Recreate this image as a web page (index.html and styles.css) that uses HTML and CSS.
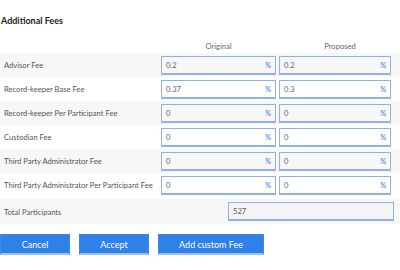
FILE: index.html
```html
<!DOCTYPE html>
<html lang="en">
<head>
    <meta charset="UTF-8">
    <title>Additional Fees</title>
    <link rel="stylesheet" href="styles.css">
</head>
<body>
    <h2 class="fees-title">Additional Fees</h2>

    <div class="fees-table">
        <div class="fees-head">
            <span></span>
            <span>Original</span>
            <span class="head-proposed">Proposed</span>
        </div>

        <div class="fee-row">
            <span class="fee-label">Advisor Fee</span>
            <div class="fee-input"><span>0.2</span><i>%</i></div>
            <div class="fee-input"><span>0.2</span><i>%</i></div>
        </div>
        <div class="fee-row">
            <span class="fee-label">Record-keeper Base Fee</span>
            <div class="fee-input"><span>0.37</span><i>%</i></div>
            <div class="fee-input"><span>0.3</span><i>%</i></div>
        </div>
        <div class="fee-row">
            <span class="fee-label">Record-keeper Per Participant Fee</span>
            <div class="fee-input"><span>0</span><i>%</i></div>
            <div class="fee-input"><span>0</span><i>%</i></div>
        </div>
        <div class="fee-row">
            <span class="fee-label">Custodian Fee</span>
            <div class="fee-input"><span>0</span><i>%</i></div>
            <div class="fee-input"><span>0</span><i>%</i></div>
        </div>
        <div class="fee-row">
            <span class="fee-label">Third Party Administrator Fee</span>
            <div class="fee-input"><span>0</span><i>%</i></div>
            <div class="fee-input"><span>0</span><i>%</i></div>
        </div>
        <div class="fee-row">
            <span class="fee-label">Third Party Administrator Per Participant Fee</span>
            <div class="fee-input"><span>0</span><i>%</i></div>
            <div class="fee-input"><span>0</span><i>%</i></div>
        </div>

        <div class="total-row">
            <span class="fee-label">Total Participants</span>
            <div class="total-input">527</div>
        </div>
    </div>

    <div class="fee-actions">
        <button class="btn">Cancel</button>
        <button class="btn">Accept</button>
        <button class="btn btn-wide">Add custom Fee</button>
    </div>
</body>
</html>
```

FILE: styles.css
```css
body {
    margin: 0;
    background: #ffffff;
    color: #555555;
    font-family: Lato, "Liberation Sans", sans-serif;
    font-size: 7.6px;
}

.fees-title {
    margin: 0;
    padding: 15px 0 0 1px;
    height: 15px;
    font-size: 9px;
    font-weight: 700;
    color: #222222;
}

.fees-table {
    margin-top: 8px;
}

/* Шапка таблицы */
.fees-head,
.fee-row {
    display: grid;
    grid-template-columns: 158px 115px 112px;
    column-gap: 3px;
    align-items: center;
}

.fees-head {
    height: 15px;
    color: #666666;
    text-align: center;
}

.head-proposed {
    padding-left: 10px;
}

.fee-row {
    height: 24px;
}

.fee-row:nth-child(even) {
    background: #f7f7f7;
}

.fee-label {
    padding-left: 4px;
    color: #555555;
    white-space: nowrap;
}

/* Поле ввода с процентом */
.fee-input {
    height: 16px;
    border: 1px solid #8fb1ea;
    border-bottom-width: 2px;
    display: flex;
    align-items: center;
    justify-content: space-between;
    padding: 0 4px;
    color: #666666;
}

.fee-input i {
    font-style: normal;
    color: #5f8fdf;
    font-weight: 700;
    font-size: 7px;
}

.total-row {
    margin-top: 2px;
    height: 25px;
    display: flex;
    align-items: center;
    justify-content: space-between;
    background: #f7f7f7;
    padding-right: 6px;
}

.total-input {
    width: 160px;
    height: 16px;
    border: 1px solid #8fb1ea;
    border-bottom-width: 2px;
    background: #f4f4f4;
    padding-left: 4px;
    display: flex;
    align-items: center;
    color: #555555;
}

/* Кнопки */
.fee-actions {
    display: flex;
    gap: 9px;
    margin-top: 10px;
}

.btn {
    width: 70px;
    height: 21px;
    background: #2f80e7;
    border: 1px solid #3b88ea;
    border-bottom: 2px solid #9dc2f2;
    color: #ffffff;
    font-family: Lato, "Liberation Sans", sans-serif;
    font-size: 9px;
    padding: 0;
}

.btn-wide {
    width: 106px;
}
```
